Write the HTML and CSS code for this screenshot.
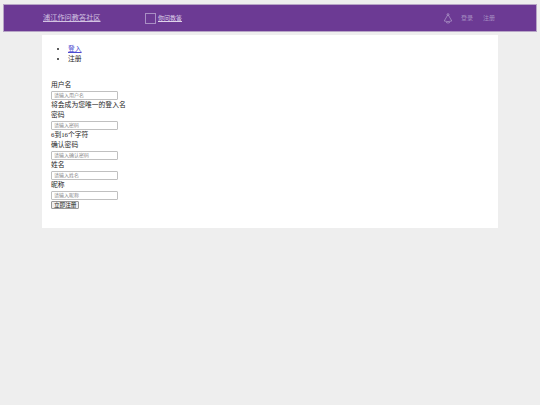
FILE: index.html
```html
<!DOCTYPE html>
<html lang="zh">
<head>
    <meta charset="UTF-8">
    <meta name="viewport" content="width=device-width, initial-scale=1.0">
    <title>浦江作问教答社区</title>
    <link rel="stylesheet" href="styles.css">
</head>
<body>
    <div class="navbar">
        <a class="brand" href="#">浦江作问教答社区</a>
        <div class="nav-search">
            <span class="search-box"></span>
            <a class="search-link" href="#">你问教答</a>
        </div>
        <div class="nav-right">
            <svg class="bell" width="10" height="11" viewBox="0 0 10 11" fill="none" stroke="#a88fc4" stroke-width="0.8">
                <path d="M5 1.5 L1.2 8 Q5 9.2 8.8 8 Z"/>
                <circle cx="5" cy="1.6" r="1"/>
                <path d="M3 9.4 Q5 10.8 7 9.4"/>
            </svg>
            <a class="nav-link" href="#">登录</a>
            <a class="nav-link" href="#">注册</a>
        </div>
    </div>
    <div class="main">
        <ul class="tabs">
            <li><a href="#">登入</a></li>
            <li>注册</li>
        </ul>
        <form class="form">
            <label>用户名</label>
            <input type="text" placeholder="请输入用户名">
            <div>将会成为您唯一的登入名</div>
            <label>密码</label>
            <input type="password" placeholder="请输入密码">
            <div>6到16个字符</div>
            <label>确认密码</label>
            <input type="password" placeholder="请输入确认密码">
            <label>姓名</label>
            <input type="text" placeholder="请输入姓名">
            <label>昵称</label>
            <input type="text" placeholder="请输入昵称">
            <button type="button">立即注册</button>
        </form>
    </div>
</body>
</html>
```

FILE: styles.css
```css
body {
    font-family: "Liberation Serif", "Noto Sans CJK SC", serif;
    font-size: 6.8px;
    line-height: 10px;
    background-color: #eeeeee;
    color: #262626;
    margin: 0;
    padding: 4px 3px 0;
}

.navbar {
    background-color: #6c3a94;
    border: 1px solid #b7a5c6;
    height: 26px;
    display: flex;
    align-items: center;
    padding-left: 39px;
}

.brand {
    color: #d3c3e2;
    font-size: 7.2px;
    width: 102px;
}

.nav-search {
    display: flex;
    align-items: center;
    gap: 2px;
}

.search-box {
    width: 9px;
    height: 9px;
    border: 1px solid #a98fc4;
}

.search-link {
    color: #dfd3ea;
    font-size: 6px;
}

.nav-right {
    margin-left: auto;
    margin-right: 41px;
    display: flex;
    align-items: center;
}

.bell {
    margin-right: 8px;
}

.nav-link {
    color: #a68ec2;
    font-size: 6px;
    text-decoration: none;
    margin-right: 10px;
}

.nav-link:last-child {
    margin-right: 0;
}

.main {
    background-color: #ffffff;
    width: 456px;
    height: 193px;
    margin: 3px 0 0 39px;
    padding: 9px;
    box-sizing: border-box;
}

.tabs {
    margin: 0 0 16px;
    padding-left: 17px;
}

.tabs a {
    color: #4a4ad0;
}

.form label,
.form div {
    display: block;
    height: 10px;
}

.form input {
    display: block;
    width: 67px;
    height: 9px;
    box-sizing: border-box;
    margin: 1px 0 0;
    padding: 0 2px;
    border: 1px solid #c0c0c0;
    border-radius: 1px;
    font-size: 5px;
    font-family: inherit;
}

.form input::placeholder {
    color: #8a8a8a;
}

.form button {
    display: block;
    height: 8px;
    padding: 0 2px;
    margin: 1px 0 0;
    font-size: 5.6px;
    line-height: 6px;
    font-family: inherit;
    color: #222222;
    background-color: #efefef;
    border: 1px solid #999999;
    border-radius: 1px;
}
```
